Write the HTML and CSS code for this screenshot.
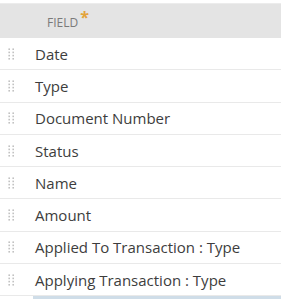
FILE: index.html
```html
<!DOCTYPE html>
<html>
<head>
<meta charset="utf-8">
<link rel="stylesheet" href="styles.css">
</head>
<body>
<div class="table">
  <div class="head"><span class="head-label">FIELD<span class="req">*</span></span></div>
  <div class="row"><svg class="grip" viewBox="0 0 7 12"><g fill="#c2c2c2"><rect x="0.4" y="0.4" width="1.6" height="1.6"/><rect x="4.4" y="0.4" width="1.6" height="1.6"/><rect x="0.4" y="3.6" width="1.6" height="1.6"/><rect x="4.4" y="3.6" width="1.6" height="1.6"/><rect x="0.4" y="6.8" width="1.6" height="1.6"/><rect x="4.4" y="6.8" width="1.6" height="1.6"/><rect x="0.4" y="10" width="1.6" height="1.6"/><rect x="4.4" y="10" width="1.6" height="1.6"/></g></svg><span class="label">Date</span></div>
  <div class="row"><svg class="grip" viewBox="0 0 7 12"><g fill="#c2c2c2"><rect x="0.4" y="0.4" width="1.6" height="1.6"/><rect x="4.4" y="0.4" width="1.6" height="1.6"/><rect x="0.4" y="3.6" width="1.6" height="1.6"/><rect x="4.4" y="3.6" width="1.6" height="1.6"/><rect x="0.4" y="6.8" width="1.6" height="1.6"/><rect x="4.4" y="6.8" width="1.6" height="1.6"/><rect x="0.4" y="10" width="1.6" height="1.6"/><rect x="4.4" y="10" width="1.6" height="1.6"/></g></svg><span class="label">Type</span></div>
  <div class="row"><svg class="grip" viewBox="0 0 7 12"><g fill="#c2c2c2"><rect x="0.4" y="0.4" width="1.6" height="1.6"/><rect x="4.4" y="0.4" width="1.6" height="1.6"/><rect x="0.4" y="3.6" width="1.6" height="1.6"/><rect x="4.4" y="3.6" width="1.6" height="1.6"/><rect x="0.4" y="6.8" width="1.6" height="1.6"/><rect x="4.4" y="6.8" width="1.6" height="1.6"/><rect x="0.4" y="10" width="1.6" height="1.6"/><rect x="4.4" y="10" width="1.6" height="1.6"/></g></svg><span class="label">Document Number</span></div>
  <div class="row"><svg class="grip" viewBox="0 0 7 12"><g fill="#c2c2c2"><rect x="0.4" y="0.4" width="1.6" height="1.6"/><rect x="4.4" y="0.4" width="1.6" height="1.6"/><rect x="0.4" y="3.6" width="1.6" height="1.6"/><rect x="4.4" y="3.6" width="1.6" height="1.6"/><rect x="0.4" y="6.8" width="1.6" height="1.6"/><rect x="4.4" y="6.8" width="1.6" height="1.6"/><rect x="0.4" y="10" width="1.6" height="1.6"/><rect x="4.4" y="10" width="1.6" height="1.6"/></g></svg><span class="label">Status</span></div>
  <div class="row"><svg class="grip" viewBox="0 0 7 12"><g fill="#c2c2c2"><rect x="0.4" y="0.4" width="1.6" height="1.6"/><rect x="4.4" y="0.4" width="1.6" height="1.6"/><rect x="0.4" y="3.6" width="1.6" height="1.6"/><rect x="4.4" y="3.6" width="1.6" height="1.6"/><rect x="0.4" y="6.8" width="1.6" height="1.6"/><rect x="4.4" y="6.8" width="1.6" height="1.6"/><rect x="0.4" y="10" width="1.6" height="1.6"/><rect x="4.4" y="10" width="1.6" height="1.6"/></g></svg><span class="label">Name</span></div>
  <div class="row"><svg class="grip" viewBox="0 0 7 12"><g fill="#c2c2c2"><rect x="0.4" y="0.4" width="1.6" height="1.6"/><rect x="4.4" y="0.4" width="1.6" height="1.6"/><rect x="0.4" y="3.6" width="1.6" height="1.6"/><rect x="4.4" y="3.6" width="1.6" height="1.6"/><rect x="0.4" y="6.8" width="1.6" height="1.6"/><rect x="4.4" y="6.8" width="1.6" height="1.6"/><rect x="0.4" y="10" width="1.6" height="1.6"/><rect x="4.4" y="10" width="1.6" height="1.6"/></g></svg><span class="label">Amount</span></div>
  <div class="row"><svg class="grip" viewBox="0 0 7 12"><g fill="#c2c2c2"><rect x="0.4" y="0.4" width="1.6" height="1.6"/><rect x="4.4" y="0.4" width="1.6" height="1.6"/><rect x="0.4" y="3.6" width="1.6" height="1.6"/><rect x="4.4" y="3.6" width="1.6" height="1.6"/><rect x="0.4" y="6.8" width="1.6" height="1.6"/><rect x="4.4" y="6.8" width="1.6" height="1.6"/><rect x="0.4" y="10" width="1.6" height="1.6"/><rect x="4.4" y="10" width="1.6" height="1.6"/></g></svg><span class="label">Applied To Transaction : Type</span></div>
  <div class="row"><svg class="grip" viewBox="0 0 7 12"><g fill="#c2c2c2"><rect x="0.4" y="0.4" width="1.6" height="1.6"/><rect x="4.4" y="0.4" width="1.6" height="1.6"/><rect x="0.4" y="3.6" width="1.6" height="1.6"/><rect x="4.4" y="3.6" width="1.6" height="1.6"/><rect x="0.4" y="6.8" width="1.6" height="1.6"/><rect x="4.4" y="6.8" width="1.6" height="1.6"/><rect x="0.4" y="10" width="1.6" height="1.6"/><rect x="4.4" y="10" width="1.6" height="1.6"/></g></svg><span class="label">Applying Transaction : Type</span></div>
  <div class="foot"><span class="foot-bar"></span></div>
</div>
</body>
</html>
```
FILE: styles.css
```css
html, body {
  margin: 0;
  padding: 0;
  background: #ffffff;
}
body {
  font-family: "Open Sans", "Liberation Sans", sans-serif;
  width: 281px;
  height: 302px;
  overflow: hidden;
}
.table {
  padding-top: 3px;
  display: flex;
  flex-direction: column;
}
.head {
  height: 35px;
  background: #e4e4e4;
  border-top: 1px solid #ececec;
  box-sizing: border-box;
  display: flex;
  align-items: center;
  padding-left: 47px;
}
.head-label {
  font-size: 12px;
  color: #7a7a7a;
  position: relative;
  top: 1px;
}
.req {
  color: #e3a33a;
  font-size: 16px;
  font-weight: 700;
  position: relative;
  top: -4px;
  margin-left: 2px;
  line-height: 0;
}
.row {
  height: 32.3px;
  box-sizing: border-box;
  border-bottom: 1px solid #e9e9e9;
  display: flex;
  align-items: center;
}
.row:last-of-type {
  border-bottom: 1px solid #cfcfcf;
}
.grip {
  width: 7px;
  height: 12px;
  margin-left: 8px;
  margin-right: 20px;
  flex: none;
}
.label {
  font-size: 15px;
  color: #3d3d3d;
}
.foot {
  display: flex;
}
.foot-bar {
  margin-left: 33px;
  height: 3px;
  flex: 1;
  background: #cfdde8;
}
```
